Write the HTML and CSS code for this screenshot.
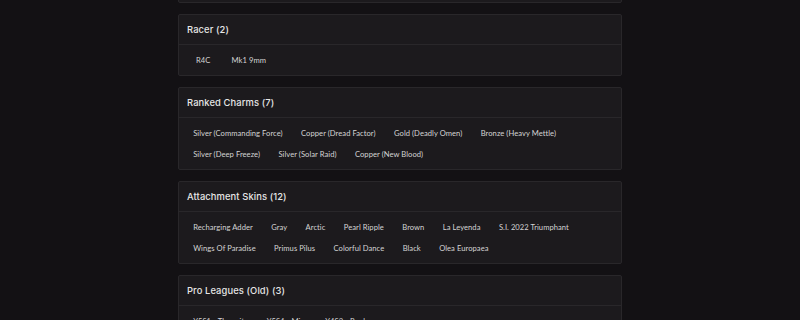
FILE: index.html
```html
<!DOCTYPE html>
<html>
  <head>
    <meta charset="utf-8" />
    <title>Collection</title>
    <link rel="stylesheet" href="styles.css">
  </head>
<body>

  <div class="page">

    <div class="group">
      <div class="groupHead">Headgear (4)</div>
      <div class="groupBody">
        <span class="item">Default</span>
      </div>
    </div>

    <div class="group">
      <div class="groupHead">Racer (2)</div>
      <div class="groupBody">
        <span class="item short">R4C</span>
        <span class="item">Mk1 9mm</span>
      </div>
    </div>

    <div class="group">
      <div class="groupHead">Ranked Charms (7)</div>
      <div class="groupBody">
        <span class="item">Silver (Commanding Force)</span>
        <span class="item">Copper (Dread Factor)</span>
        <span class="item">Gold (Deadly Omen)</span>
        <span class="item">Bronze (Heavy Mettle)</span>
        <span class="item">Silver (Deep Freeze)</span>
        <span class="item">Silver (Solar Raid)</span>
        <span class="item">Copper (New Blood)</span>
      </div>
    </div>

    <div class="group">
      <div class="groupHead">Attachment Skins (12)</div>
      <div class="groupBody">
        <span class="item">Recharging Adder</span>
        <span class="item">Gray</span>
        <span class="item">Arctic</span>
        <span class="item">Pearl Ripple</span>
        <span class="item">Brown</span>
        <span class="item">La Leyenda</span>
        <span class="item">S.I. 2022 Triumphant</span>
        <span class="item">Wings Of Paradise</span>
        <span class="item">Primus Pilus</span>
        <span class="item">Colorful Dance</span>
        <span class="item">Black</span>
        <span class="item">Olea Europaea</span>
      </div>
    </div>

    <div class="group">
      <div class="groupHead">Pro Leagues (Old) (3)</div>
      <div class="groupBody">
        <span class="item">Y5S1 - Thermite</span>
        <span class="item">Y5S4 - Mira</span>
        <span class="item">Y4S2 - Rook</span>
      </div>
    </div>

  </div>

  </body>
</html>
```

FILE: styles.css
```css
body
{
  margin: 0px;
  padding: 0px;
  background-color: #131114;
  font-family: Lato, 'Noto Sans', sans-serif;
  color: #e6e6e6;
}

.page
{
  width: 444px;
  margin: -59px auto 0 auto;
  display: flex;
  flex-direction: column;
  gap: 11px;
}

.group
{
  background-color: #1c1a1d;
  border: 1px solid #29272a;
  border-radius: 2px;
}

.groupHead
{
  height: 29px;
  line-height: 30px;
  padding: 0 8px;
  font-family: Inter, Lato, sans-serif;
  font-size: 9.4px;
  font-weight: 500;
  letter-spacing: 0.1px;
  border-bottom: 1px solid #29272a;
}

.groupBody
{
  padding: 4.5px 5px;
  display: flex;
  flex-wrap: wrap;
}

.item
{
  height: 21px;
  line-height: 21px;
  padding: 0 9.2px;
  font-size: 7.6px;
  letter-spacing: 0.05px;
  color: #d4d4d4;
}

.short
{
  min-width: 20px;
  text-align: center;
}
```
